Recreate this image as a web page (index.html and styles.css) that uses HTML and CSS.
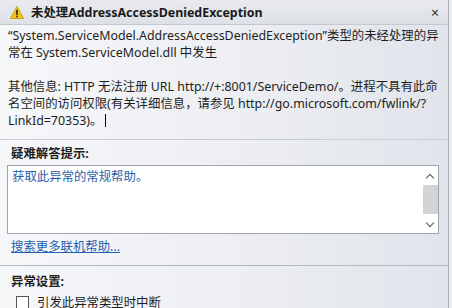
FILE: index.html
```html
<!DOCTYPE html>
<html lang="zh-CN">
<head>
<meta charset="utf-8">
<link rel="stylesheet" href="styles.css">
</head>
<body>
<div class="window">
  <div class="titlebar">
    <svg class="warn" width="14" height="13" viewBox="0 0 14 13">
      <path d="M7 0.5 L13.6 12.5 L0.4 12.5 Z" fill="#f3c417" stroke="#c89200" stroke-width="0.8" stroke-linejoin="round"/>
      <rect x="6.2" y="3.8" width="1.6" height="5" fill="#222"/>
      <rect x="6.2" y="9.7" width="1.6" height="1.6" fill="#222"/>
    </svg>
    <span class="title">未处理AddressAccessDeniedException</span>
    <span class="close">×</span>
  </div>
  <div class="message">
    <p>“System.ServiceModel.AddressAccessDeniedException”类型的未经处理的异常在 System.ServiceModel.dll 中发生</p>
    <p>其他信息: HTTP 无法注册 URL http://+:8001/ServiceDemo/。进程不具有此命名空间的访问权限(有关详细信息，请参见 http://go.microsoft.com/fwlink/?LinkId=70353)。<span class="caret"></span></p>
  </div>
  <div class="section">
    <div class="heading">疑难解答提示:</div>
    <div class="tips">
      <div class="tips-text">获取此异常的常规帮助。</div>
      <div class="scrollbar">
        <span class="arrow up"></span>
        <span class="thumb"></span>
        <span class="arrow down"></span>
      </div>
    </div>
    <a class="more">搜索更多联机帮助...</a>
  </div>
  <div class="section settings">
    <div class="heading">异常设置:</div>
    <label class="check"><span class="box"></span>引发此异常类型时中断</label>
  </div>
</div>
</body>
</html>
```

FILE: styles.css
```css
html, body {
  margin: 0;
  padding: 0;
  width: 452px;
  height: 308px;
  overflow: hidden;
  background: #eceef2;
}
body {
  font-family: "Noto Sans", "Noto Sans CJK SC", sans-serif;
  font-size: 12.4px;
  color: #1e1e1e;
}
.window {
  width: 448px;
  height: 308px;
  border-right: 1px solid #a7abb5;
  background: linear-gradient(90deg, #f6f7f9 0%, #eceef2 55%, #e1e4eb 100%);
  box-sizing: content-box;
}
.titlebar {
  height: 25px;
  display: flex;
  align-items: center;
  padding: 0 8px 0 10px;
  background: linear-gradient(180deg, #e8eaee 0%, #dde0e6 100%);
  border-bottom: 1px solid #c3c7cf;
  box-sizing: border-box;
}
.warn {
  flex: none;
  margin-right: 7px;
}
.title {
  font-weight: bold;
  font-size: 12.4px;
  flex: 1;
  color: #1a1a1a;
}
.close {
  font-size: 14px;
  color: #333;
  margin-right: 1px;
}
.message {
  padding: 2px 8px 0 8px;
  line-height: 17px;
  height: 115px;
  border-bottom: 1px solid #c9ccd3;
  box-sizing: border-box;
}
.message p {
  margin: 0 0 17px 0;
}
.caret {
  display: inline-block;
  width: 1px;
  height: 13px;
  background: #000;
  vertical-align: -2px;
  margin-left: 3px;
}
.section {
  padding: 0 7px 0 7px;
  border-bottom: 1px solid #b3b7bf;
}
.heading {
  font-weight: bold;
  line-height: 17px;
  padding: 5px 0 3px 4px;
}
.tips {
  height: 69px;
  border: 1px solid #9ea3ad;
  background: #fff;
  display: flex;
  box-sizing: border-box;
  margin-right: 2px;
}
.tips-text {
  flex: 1;
  color: #1f5fae;
  padding: 2px 4px;
  line-height: 17px;
}
.scrollbar {
  width: 16px;
  margin: 1px 0;
  display: flex;
  flex-direction: column;
  align-items: center;
}
.arrow {
  display: block;
  width: 5px;
  height: 5px;
  border-left: 1.5px solid #555;
  border-top: 1.5px solid #555;
  margin: 6px 0 4px 0;
}
.arrow.up {
  transform: rotate(45deg);
  margin-top: 8px;
}
.arrow.down {
  transform: rotate(225deg);
  margin: 2px 0 6px 0;
}
.thumb {
  display: block;
  width: 15px;
  flex: 1;
  background: #d4d4d6;
  margin: 0 0 4px 0;
}
.more {
  display: inline-block;
  color: #1f5fae;
  text-decoration: underline;
  line-height: 17px;
  padding: 4px 0 10px 4px;
}
.settings {
  border-bottom: none;
}
.settings .heading {
  padding-top: 7px;
  padding-bottom: 1px;
}
.check {
  display: flex;
  align-items: center;
  padding: 3px 0 0 9px;
  line-height: 17px;
}
.box {
  width: 11px;
  height: 11px;
  border: 1px solid #555;
  background: #fff;
  margin-right: 8px;
}
```
